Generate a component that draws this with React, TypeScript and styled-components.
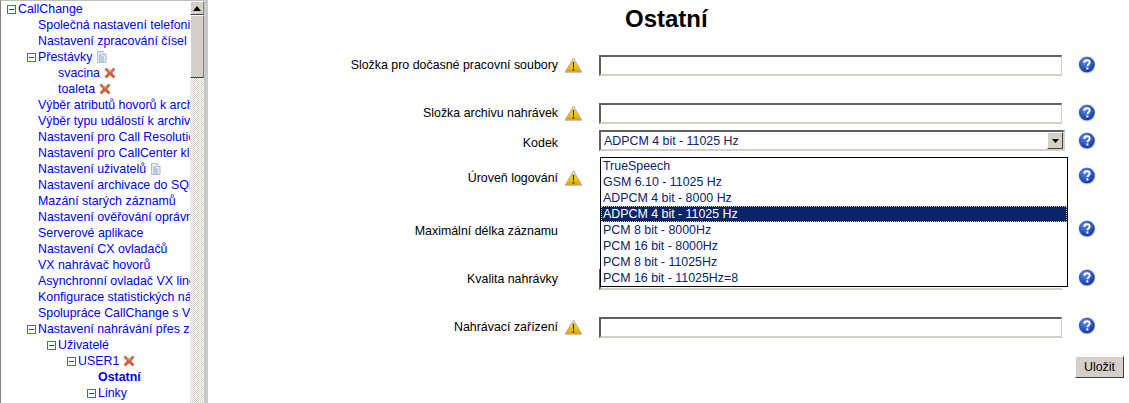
import React from "react";
import styled, { createGlobalStyle } from "styled-components";

const Global = createGlobalStyle`
  html, body { margin: 0; padding: 0; background: #fff; overflow: hidden; }
  body { font-family: "Liberation Sans", Arial, sans-serif; font-size: 12px; }
`;

const Page = styled.div`
  display: flex;
  width: 1129px;
  height: 403px;
  overflow: hidden;
`;

const Sidebar = styled.nav`
  display: flex;
  flex: none;
  width: 204px;
  height: 403px;
  box-sizing: border-box;
  border-top: 1px solid #c0c0c0;
  border-left: 1px solid #808080;
`;

const Divider = styled.div`
  flex: none;
  width: 4px;
  background: #c8c8c8;
`;

const Tree = styled.ul`
  flex: none;
  width: 189px;
  margin: 0;
  padding: 0;
  list-style: none;
  overflow: hidden;
`;

const Node = styled.li<{ $level: number; $toggle?: boolean }>`
  display: flex;
  align-items: center;
  height: 16px;
  padding-left: ${(p) => (p.$toggle ? 6 + p.$level * 20 : 17 + p.$level * 20)}px;
  color: #0000ff;
  font-size: 12.4px;
  white-space: nowrap;
  &:first-child { margin-top: 0; }
`;

const NodeText = styled.span<{ $bold?: boolean }>`
  font-weight: ${(p) => (p.$bold ? 700 : 400)};
`;

const Toggle = styled.svg`
  flex: none;
  width: 9px;
  height: 9px;
  margin-right: 2px;
`;

const Glyph = styled.svg`
  flex: none;
  margin-left: 4px;
`;

const Scrollbar = styled.div`
  flex: none;
  display: flex;
  flex-direction: column;
  width: 14px;
  background: repeating-conic-gradient(#d4d0c8 0 25%, #ffffff 0 50%) 0 0 / 2px 2px;
`;

const ScrollButton = styled.div`
  flex: none;
  display: flex;
  align-items: center;
  justify-content: center;
  height: 14px;
  background: #d4d0c8;
  box-sizing: border-box;
  border-top: 1px solid #fff;
  border-left: 1px solid #fff;
  border-right: 1px solid #808080;
  border-bottom: 1px solid #404040;
`;

const ScrollThumb = styled.div`
  flex: none;
  height: 63px;
  background: #d4d0c8;
  box-sizing: border-box;
  border-top: 1px solid #fff;
  border-left: 1px solid #fff;
  border-right: 1px solid #808080;
  border-bottom: 1px solid #404040;
`;

const Main = styled.main`
  position: relative;
  flex: 1;
  min-width: 0;
  height: 403px;
`;

const Title = styled.h1`
  margin: 0;
  padding: 4px 0 0 417px;
  height: 46px;
  box-sizing: border-box;
  font-size: 24px;
  line-height: 30px;
  font-weight: 700;
  color: #000;
`;

const Row = styled.div<{ $gap?: number }>`
  display: grid;
  grid-template-columns: 350px 25px 16px 463px 16px 18px;
  align-items: center;
  height: 30px;
  margin-top: ${(p) => p.$gap ?? 0}px;
  padding-right: 32px;
`;

const Label = styled.label`
  grid-column: 1;
  text-align: right;
  font-size: 12.4px;
  color: #000;
  white-space: nowrap;
  position: relative;
`;

const IconCell = styled.div`
  grid-column: 2;
  display: flex;
  padding-left: 6px;
`;

const Input = styled.input`
  grid-column: 4;
  width: 463px;
  height: 21px;
  box-sizing: border-box;
  border: 2px solid;
  border-color: #5f5f5f #d4d0c8 #d4d0c8 #5f5f5f;
  border-width: 2px 1px 2px 2px;
  background: #fff;
  padding: 0;
`;

const Select = styled.div`
  grid-column: 4;
  width: 466px;
  height: 21px;
  margin-top: -5px;
  box-sizing: border-box;
  display: flex;
  align-items: center;
  justify-content: space-between;
  border: 2px solid;
  border-color: #5f5f5f #d4d0c8 #d4d0c8 #5f5f5f;
  color: #0a246a;
  font-size: 12.4px;
  padding-left: 3px;
`;

const SelectArrow = styled.div`
  display: flex;
  align-items: center;
  justify-content: center;
  width: 16px;
  height: 17px;
  box-sizing: border-box;
  background: #d4d0c8;
  border-top: 1px solid #fff;
  border-left: 1px solid #fff;
  border-right: 1px solid #404040;
  border-bottom: 1px solid #404040;
`;

const HelpCell = styled.div<{ $up?: number }>`
  grid-column: 6;
  display: flex;
  margin-top: ${(p) => -(p.$up ?? 0)}px;
`;

const Dropdown = styled.ul`
  position: absolute;
  left: 392px;
  top: 157px;
  width: 468px;
  height: 130px;
  margin: 0;
  padding: 0;
  list-style: none;
  box-sizing: border-box;
  border: 1px solid #000;
  background: #fff;
  z-index: 2;
`;

const Option = styled.li<{ $selected?: boolean }>`
  height: 16px;
  line-height: 16px;
  padding-left: 2px;
  font-size: 12.4px;
  color: ${(p) => (p.$selected ? "#fff" : "#0a246a")};
  background: ${(p) => (p.$selected ? "#0a246a" : "transparent")};
  outline: ${(p) => (p.$selected ? "1px dotted #d8c890" : "none")};
  outline-offset: -1px;
  white-space: nowrap;
`;

const Actions = styled.div`
  display: flex;
  justify-content: flex-end;
  padding: 14px 5px 0 0;
`;

const SaveButton = styled.button`
  width: 49px;
  height: 22px;
  padding: 0;
  box-sizing: border-box;
  background: #d4d0c8;
  border: 1px solid;
  border-color: #fff #404040 #404040 #fff;
  font-family: inherit;
  font-size: 12.4px;
  color: #000;
`;

const MinusBox = () => (
  <Toggle viewBox="0 0 9 9">
    <rect x="0.5" y="0.5" width="8" height="8" fill="#fff" stroke="#4a62d0" />
    <path d="M2 4.5h5" stroke="#2a3fb0" />
  </Toggle>
);

const DocIcon = () => (
  <Glyph width="11" height="12" viewBox="0 0 11 12">
    <path d="M1.5.5h5.5l3 3v8h-8.500z" fill="#e6eef4" stroke="#a8bccc" />
    <path d="M3 4h3M3 6h5M3 8h5M3 10h5" stroke="#8fa9bf" />
    <path d="M7 .5v3h3" fill="#fff" stroke="#a8bccc" />
  </Glyph>
);

const DeleteIcon = () => (
  <Glyph width="12" height="12" viewBox="0 0 12 12">
    <path d="M2.500 1 6 4.300 9.500 1 11 2.500 7.700 6 11 9.500 9.500 11 6 7.700 2.500 11 1 9.500 4.300 6 1 2.500z" fill="#e2562a" stroke="#9c6a58" strokeWidth="0.8" />
    <path d="M3 2.500 6 5.200 9 2.500" fill="none" stroke="#f4a888" strokeWidth="0.8" />
  </Glyph>
);

const WarningIcon = () => (
  <svg width="20" height="18" viewBox="0 0 20 18">
    <defs>
      <linearGradient id="warn" x1="0" y1="0" x2="0" y2="1">
        <stop offset="0" stopColor="#fff3a0" />
        <stop offset="0.6" stopColor="#f0c010" />
        <stop offset="1" stopColor="#e0a000" />
      </linearGradient>
    </defs>
    <path d="M10 1.500 18.800 16.500H1.200z" fill="url(#warn)" stroke="#b0aca0" strokeLinejoin="round" />
    <path d="M9.200 5.500h1.600l-.3 6.500h-1zM9.200 13h1.600v2h-1.600z" fill="#3a3010" />
  </svg>
);

const HelpIcon = () => (
  <svg width="18" height="18" viewBox="0 0 18 18">
    <defs>
      <radialGradient id="help" cx="0.4" cy="0.3" r="0.8">
        <stop offset="0" stopColor="#5f8fe8" />
        <stop offset="0.7" stopColor="#1f48b0" />
        <stop offset="1" stopColor="#15307c" />
      </radialGradient>
    </defs>
    <circle cx="9" cy="9" r="8.500" fill="#bcc0c8" />
    <circle cx="8.800" cy="8.500" r="7.800" fill="url(#help)" />
    <path d="M6.300 6.800C6.300 5.200 7.500 4.300 9 4.300s2.700.9 2.700 2.300c0 1.800-2.300 1.900-2.300 3.700" fill="none" stroke="#fff" strokeWidth="1.900" />
    <rect x="8.300" y="11.400" width="2.100" height="2.100" fill="#fff" />
  </svg>
);

const ArrowUp = () => (
  <svg width="8" height="5" viewBox="0 0 8 5"><path d="M4 0 8 5H0z" fill="#000" /></svg>
);
const ArrowDown = () => (
  <svg width="7" height="4" viewBox="0 0 7 4"><path d="M0 0h7L3.500 4z" fill="#000" /></svg>
);

type TreeItem = { text: string; level: number; toggle?: boolean; bold?: boolean; icon?: "doc" | "del" };

const tree: TreeItem[] = [
  { text: "CallChange", level: 0, toggle: true },
  { text: "Společná nastavení telefonie", level: 1 },
  { text: "Nastavení zpracování čísel", level: 1 },
  { text: "Přestávky", level: 1, toggle: true, icon: "doc" },
  { text: "svacina", level: 2, icon: "del" },
  { text: "toaleta", level: 2, icon: "del" },
  { text: "Výběr atributů hovorů k archivaci", level: 1 },
  { text: "Výběr typu událostí k archivaci", level: 1 },
  { text: "Nastavení pro Call Resolution", level: 1 },
  { text: "Nastavení pro CallCenter klienta", level: 1 },
  { text: "Nastavení uživatelů", level: 1, icon: "doc" },
  { text: "Nastavení archivace do SQL", level: 1 },
  { text: "Mazání starých záznamů", level: 1 },
  { text: "Nastavení ověřování oprávnění", level: 1 },
  { text: "Serverové aplikace", level: 1 },
  { text: "Nastavení CX ovladačů", level: 1 },
  { text: "VX nahrávač hovorů", level: 1 },
  { text: "Asynchronní ovladač VX linek", level: 1 },
  { text: "Konfigurace statistických národů", level: 1 },
  { text: "Spolupráce CallChange s VX", level: 1 },
  { text: "Nastavení nahrávání přes záznam", level: 1, toggle: true },
  { text: "Uživatelé", level: 2, toggle: true },
  { text: "USER1", level: 3, toggle: true, icon: "del" },
  { text: "Ostatní", level: 4, bold: true },
  { text: "Linky", level: 4, toggle: true },
];

const options = [
  "TrueSpeech",
  "GSM 6.10 - 11025 Hz",
  "ADPCM 4 bit - 8000 Hz",
  "ADPCM 4 bit - 11025 Hz",
  "PCM 8 bit - 8000Hz",
  "PCM 16 bit - 8000Hz",
  "PCM 8 bit - 11025Hz",
  "PCM 16 bit - 11025Hz=8",
];

export default function App() {
  return (
    <Page>
      <Global />
      <Sidebar>
        <Tree>
          {tree.map((n) => (
            <Node key={n.text} $level={n.toggle ? n.level : n.level} $toggle={n.toggle}>
              {n.toggle && <MinusBox />}
              <NodeText $bold={n.bold}>{n.text}</NodeText>
              {n.icon === "doc" && <DocIcon />}
              {n.icon === "del" && <DeleteIcon />}
            </Node>
          ))}
        </Tree>
        <Scrollbar>
          <ScrollButton><ArrowUp /></ScrollButton>
          <ScrollThumb />
        </Scrollbar>
      </Sidebar>
      <Divider />
      <Main>
        <Title>Ostatní</Title>
        <Row $gap={4}>
          <Label>Složka pro dočasné pracovní soubory</Label>
          <IconCell><WarningIcon /></IconCell>
          <Input />
          <HelpCell $up={1}><HelpIcon /></HelpCell>
        </Row>
        <Row $gap={18}>
          <Label>Složka archivu nahrávek</Label>
          <IconCell><WarningIcon /></IconCell>
          <Input />
          <HelpCell $up={1}><HelpIcon /></HelpCell>
        </Row>
        <Row>
          <Label>Kodek</Label>
          <Select>
            ADPCM 4 bit - 11025 Hz
            <SelectArrow><ArrowDown /></SelectArrow>
          </Select>
          <HelpCell $up={4}><HelpIcon /></HelpCell>
        </Row>
        <Row $gap={5}>
          <Label>Úroveň logování</Label>
          <IconCell><WarningIcon /></IconCell>
          <HelpCell $up={4}><HelpIcon /></HelpCell>
        </Row>
        <Row $gap={23}>
          <Label>Maximální délka záznamu</Label>
          <HelpCell $up={4}><HelpIcon /></HelpCell>
        </Row>
        <Row $gap={18}>
          <Label>Kvalita nahrávky</Label>
          <Input />
          <HelpCell $up={2}><HelpIcon /></HelpCell>
        </Row>
        <Row $gap={18}>
          <Label>Nahrávací zařízení</Label>
          <IconCell><WarningIcon /></IconCell>
          <Input />
          <HelpCell $up={2}><HelpIcon /></HelpCell>
        </Row>
        <Actions>
          <SaveButton>Uložit</SaveButton>
        </Actions>
        <Dropdown>
          {options.map((o, i) => (
            <Option key={o} $selected={i === 3}>{o}</Option>
          ))}
        </Dropdown>
      </Main>
    </Page>
  );
}
